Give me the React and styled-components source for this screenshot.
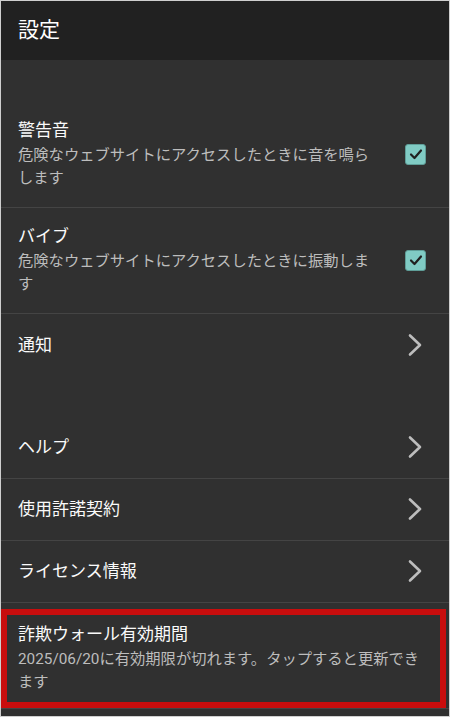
import React from "react"
import styled, { createGlobalStyle } from 'styled-components'

const GlobalStyle = createGlobalStyle`
  html, body {
    margin: 0;
    padding: 0;
    background: #303030;
  }
  body {
    font-family: Roboto, "Noto Sans CJK JP", sans-serif;
  }
  * {
    box-sizing: border-box;
  }
`

const items = [
  { type: 'category', size: 42 },
  { title: '警告音', summary: '危険なウェブサイトにアクセスしたときに音を鳴らします', widget: 'check' },
  { title: 'バイブ', summary: '危険なウェブサイトにアクセスしたときに振動します', widget: 'check' },
  { title: '通知', widget: 'arrow', last: true },
  { type: 'category', size: 41 },
  { title: 'ヘルプ', widget: 'arrow' },
  { title: '使用許諾契約', widget: 'arrow' },
  { title: 'ライセンス情報', widget: 'arrow' },
  { title: '詐欺ウォール有効期間', summary: '2025/06/20に有効期限が切れます。タップすると更新できます', highlight: true },
]

const Check = () => (
  <CheckBox>
    <svg width="14" height="14" viewBox="0 0 14 14">
      <polyline points="2,7.5 5.5,11 12,3.5" fill="none" stroke="#202020" strokeWidth="2.2" strokeLinecap="round" strokeLinejoin="round" />
    </svg>
  </CheckBox>
)

const Arrow = () => (
  <ArrowIcon width="14" height="24" viewBox="0 0 14 24">
    <polyline points="2,2.5 12,12 2,21.5" fill="none" stroke="#bdbdbd" strokeWidth="2.6" strokeLinecap="round" strokeLinejoin="round" />
  </ArrowIcon>
)

export default () => {
  return (
    <Frame>
      <GlobalStyle />
      <Header>
        <h1>設定</h1>
      </Header>
      {items.map((item, i) =>
        item.type === 'category' ? (
          <Category key={i} $size={item.size} />
        ) : (
          <Row key={i} $last={item.last} $highlight={item.highlight} $widget={item.widget}>
            <div className="text">
              <Title>{item.title}</Title>
              {item.summary && <Summary>{item.summary}</Summary>}
            </div>
            {item.widget === 'check' && <Check />}
            {item.widget === 'arrow' && <Arrow />}
          </Row>
        )
      )}
    </Frame>
  )
}

const Frame = styled.div`
  width: 450px;
  height: 717px;
  overflow: hidden;
  border: 1px solid #cfcfcf;
  background: #303030;
  display: flex;
  flex-direction: column;
`

const Header = styled.div`
  height: 59px;
  flex-shrink: 0;
  background: #212121;
  display: flex;
  align-items: center;
  padding-left: 17px;
  h1 {
    margin: 0;
    font-size: 21px;
    font-weight: 400;
    color: #fff;
    line-height: 1;
  }
`

const Category = styled.div`
  height: ${p => p.$size}px;
  flex-shrink: 0;
`

const Row = styled.div`
  position: relative;
  flex-shrink: 0;
  display: flex;
  align-items: center;
  min-height: 62px;
  padding: 16px ${p => (p.$widget === 'check' ? 23 : 27)}px 17px 17px;
  border-bottom: ${p => (p.$last ? 'none' : '1px solid #444444')};
  .text {
    flex: 1;
    min-width: 0;
    padding-right: ${p => (p.$widget ? 32 : 0)}px;
  }
  ${p => p.$highlight && `
    padding-top: 19px;
    padding-bottom: 14px;
    &::after {
      content: '';
      position: absolute;
      top: 6px;
      left: 0;
      right: 3px;
      bottom: 0;
      border: 6px solid #c80d0d;
      pointer-events: none;
    }
  `}
`

const Title = styled.div`
  font-size: 17px;
  line-height: 24px;
  color: #fafafa;
`

const Summary = styled.div`
  margin-top: 2px;
  font-size: 15.3px;
  line-height: 23px;
  color: #bdbdbd;
`

const CheckBox = styled.div`
  flex-shrink: 0;
  width: 21px;
  height: 21px;
  border-radius: 3px;
  background: #80cbc4;
  border: 1px solid #5f9e98;
  display: flex;
  align-items: center;
  justify-content: center;
`

const ArrowIcon = styled.svg`
  flex-shrink: 0;
  display: block;
`
